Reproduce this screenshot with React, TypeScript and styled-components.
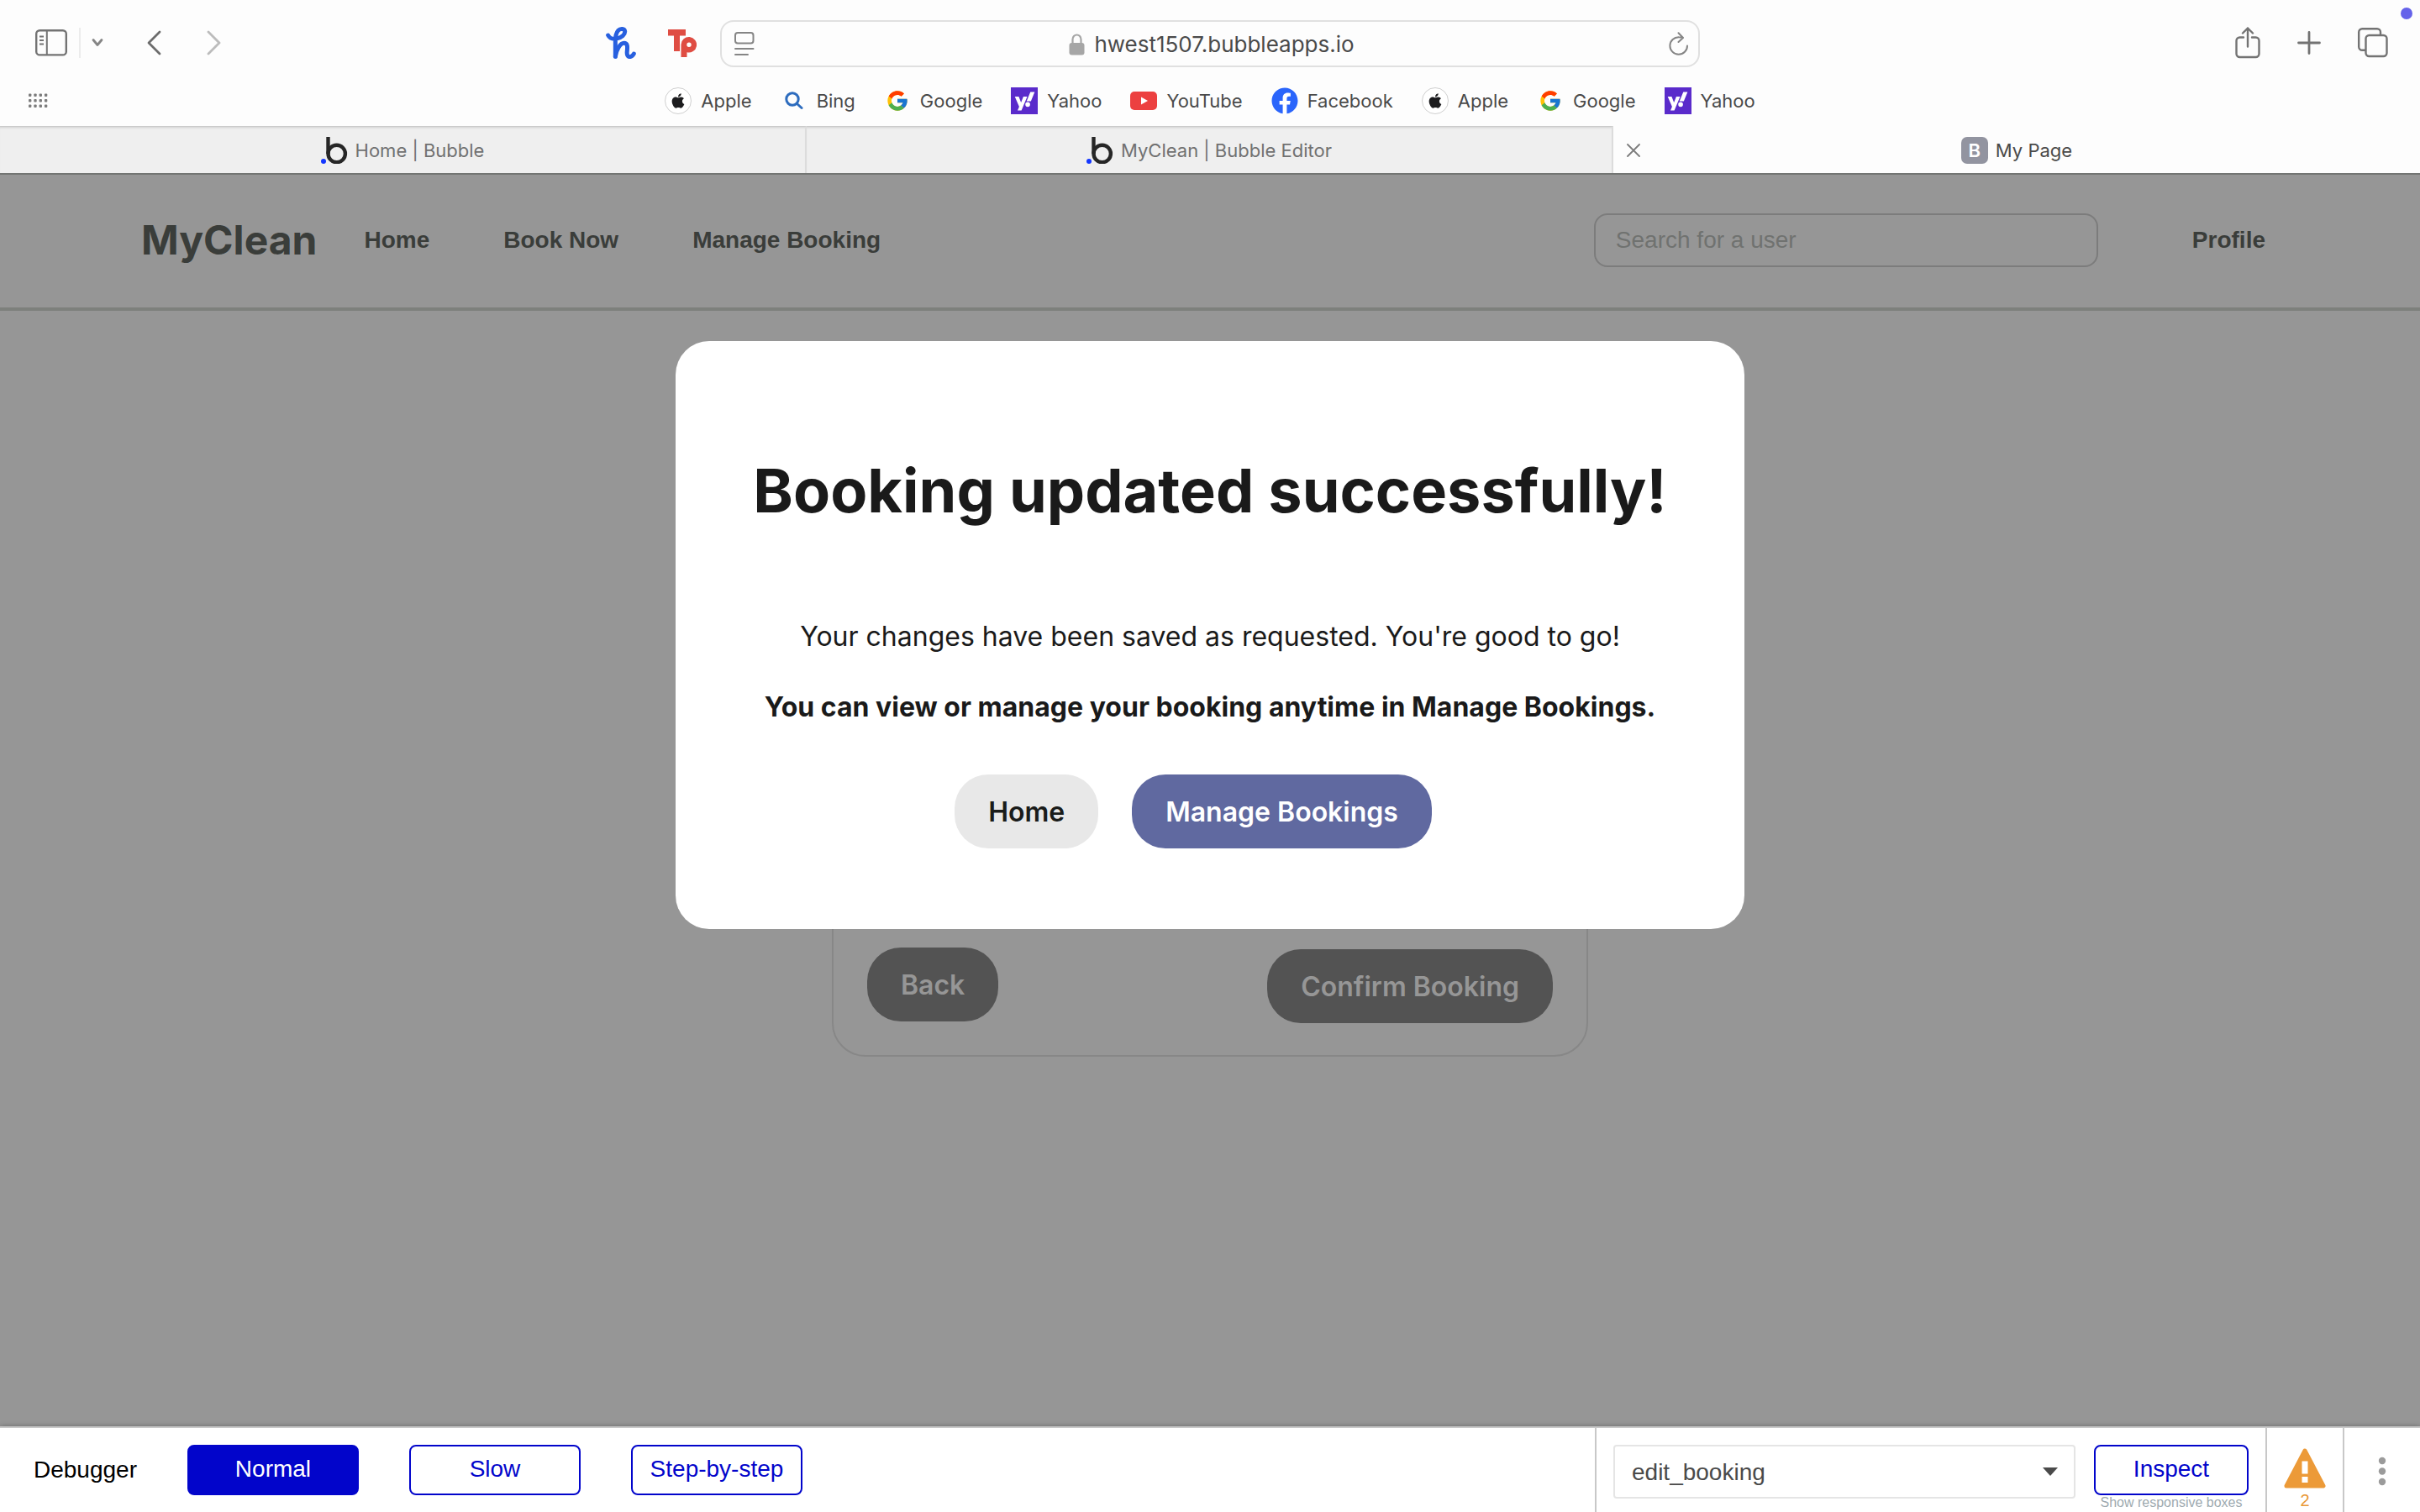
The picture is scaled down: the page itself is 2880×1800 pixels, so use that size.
import React from "react";
import styled, { createGlobalStyle, css } from "styled-components";
import { FaApple, FaFacebook, FaYahoo } from "react-icons/fa";
import { FcGoogle } from "react-icons/fc";

const ui = `Inter, Roboto, sans-serif`;
const helv = `"Liberation Sans", Arial, sans-serif`;
const blue = "#0205cb";
const line = "#c8c8c8";
const iconGrey = "#737373";

const GlobalStyle = createGlobalStyle`
  *, *::before, *::after { box-sizing: border-box; }
  body { margin: 0; background: #969696; }
  button, input, select { font: inherit; color: inherit; margin: 0; }
  svg { display: block; flex: none; }
`;

const Window = styled.div`
  display: flex;
  flex-direction: column;
  min-height: 100vh;
  font-family: ${ui};
`;

/* ---------- Browser chrome ---------- */

const Chrome = styled.header`
  position: relative;
  background: #fdfdfd;
  color: #4a4a4a;
`;

const StatusDot = styled.span`
  position: absolute;
  top: 9px;
  right: 9px;
  width: 14px;
  height: 14px;
  border-radius: 50%;
  background: #6562ea;
`;

const Toolbar = styled.div`
  display: grid;
  grid-template-columns: 1fr minmax(0, 1166px) 1fr;
  align-items: center;
  padding: 24px 0 10px;
`;

const ToolGroup = styled.div<{ $end?: boolean }>`
  display: flex;
  align-items: center;
  justify-content: ${(p) => (p.$end ? "flex-end" : "flex-start")};
  padding: ${(p) => (p.$end ? "0 38px 2px 0" : "0 28px 2px 42px")};
  gap: ${(p) => (p.$end ? "44px" : "0")};
`;

const IconButton = styled.button`
  display: flex;
  align-items: center;
  justify-content: center;
  padding: 0;
  border: 0;
  background: none;
`;

const ToolDivider = styled.span`
  width: 2px;
  height: 36px;
  margin: 0 13px 0 14px;
  background: #ececec;
`;

const HistoryButtons = styled.div`
  display: flex;
  gap: 54px;
  margin-left: 51px;
`;

const Extensions = styled.div`
  display: flex;
  align-items: center;
  gap: 38px;
  margin-left: auto;
`;

const AddressBar = styled.div`
  display: flex;
  align-items: center;
  height: 56px;
  padding: 0 11px 0 15px;
  border: 2px solid #e0e0e0;
  border-radius: 16px;
`;

const Address = styled.label`
  display: flex;
  flex: 1;
  align-items: center;
  justify-content: center;
  gap: 11px;
  padding-top: 2px;
`;

const AddressInput = styled.input`
  field-sizing: content;
  padding: 0;
  border: 0;
  outline: 0;
  background: none;
  font-size: 26px;
  line-height: 32px;
`;

const Favourites = styled.nav`
  display: grid;
  grid-template-columns: 1fr auto 1fr;
  align-items: center;
  height: 60px;
  padding: 0 33px;
`;

const FavouriteList = styled.div`
  display: flex;
  gap: 34px;
`;

const Favourite = styled.a`
  display: flex;
  align-items: center;
  gap: 11px;
  color: inherit;
  font-size: 22px;
  line-height: 32px;
  text-decoration: none;
`;

const FavIcon = styled.span<{ $bg?: string; $ring?: boolean; $round?: boolean; $color?: string }>`
  display: flex;
  align-items: center;
  justify-content: center;
  width: 32px;
  height: 32px;
  border: ${(p) => (p.$ring ? "1px solid #cfcfcf" : "0")};
  border-radius: ${(p) => (p.$ring || p.$round ? "50%" : "0")};
  background: ${(p) => p.$bg ?? "none"};
  color: ${(p) => p.$color ?? "inherit"};
`;

const TabStrip = styled.div`
  display: grid;
  grid-template-columns: 1fr 1fr 1fr;
`;

const Tab = styled.div<{ $active?: boolean }>`
  display: grid;
  grid-template-columns: 48px 1fr 48px;
  align-items: center;
  height: 56px;
  border-top: 1px solid ${(p) => (p.$active ? "#fdfdfd" : "#cbcbcb")};
  border-right: ${(p) => (p.$active ? "0" : "2px solid #dcdcdc")};
  background: ${(p) => (p.$active ? "#fdfdfd" : "#efefef")};
  box-shadow: ${(p) => (p.$active ? "none" : "inset 0 3px 3px -2px #d0d0d0")};
  color: ${(p) => (p.$active ? "#4a4a4a" : "#717171")};
`;

const TabTitle = styled.button`
  display: flex;
  grid-column: 2;
  align-items: center;
  justify-content: center;
  gap: 9px;
  padding: 0;
  border: 0;
  background: none;
  font-size: 22px;
  line-height: 32px;
`;

const LetterIcon = styled.span`
  width: 32px;
  height: 32px;
  border-radius: 7px;
  background: #9294a0;
  color: #fff;
  font-size: 22px;
  font-weight: 600;
  line-height: 33px;
  text-align: center;
`;

/* ---------- Site page under the overlay ---------- */

const Stage = styled.div`
  position: relative;
  flex: 1;
  border-top: 2px solid #737573;
  background: #969696;
`;

const SiteHeader = styled.header`
  display: flex;
  align-items: center;
  height: 162px;
  padding: 0 184px 2px 168px;
  border-bottom: 4px solid #7d807c;
  color: #3a3d3a;
  font-family: ${helv};
`;

const Brand = styled.span`
  font-family: ${ui};
  font-size: 48px;
  font-weight: 700;
  line-height: 56px;
`;

const SiteNav = styled.nav`
  display: flex;
  gap: 88px;
  margin-left: 56px;
`;

const SiteLink = styled.a`
  color: inherit;
  font-size: 28px;
  font-weight: 700;
  line-height: 32px;
  text-decoration: none;
`;

const Search = styled.input`
  width: 600px;
  height: 64px;
  margin: 0 112px 0 auto;
  padding: 0 24px;
  border: 2px solid #7c7c7c;
  border-radius: 16px;
  background: none;
  font-size: 28px;
  &::placeholder {
    color: #707270;
    opacity: 1;
  }
`;

const BookingCard = styled.section`
  display: flex;
  flex-direction: column;
  justify-content: flex-end;
  width: 900px;
  min-height: 848px;
  margin: 40px auto 0;
  padding: 38px 40px;
  border: 2px solid #878787;
  border-radius: 40px;
`;

const CardActions = styled.div`
  display: flex;
  align-items: flex-start;
  justify-content: space-between;
  min-height: 90px;
`;

const tones = {
  light: css`
    background: #e8e8e8;
    color: #1a1c1a;
  `,
  primary: css`
    background: #6069a0;
    color: #fff;
  `,
  dimmed: css`
    background: #535353;
    color: #969696;
  `,
};

const PillButton = styled.button<{ $tone: keyof typeof tones; $low?: boolean }>`
  align-self: ${(p) => (p.$low ? "flex-end" : "flex-start")};
  height: 88px;
  padding: 2px 40px 0;
  border: 0;
  border-radius: 40px;
  font-size: 32px;
  font-weight: 600;
  line-height: 40px;
  ${(p) => tones[p.$tone]}
`;

/* ---------- Dialog ---------- */

const Overlay = styled.div`
  position: absolute;
  inset: 0;
  display: flex;
  align-items: flex-start;
  justify-content: center;
  padding-top: 198px;
`;

const Dialog = styled.div`
  display: flex;
  flex-direction: column;
  align-items: center;
  width: 1272px;
  padding: 134px 40px 96px;
  border-radius: 40px;
  background: #fff;
  color: #1a1a1a;
  text-align: center;
`;

const DialogTitle = styled.h1`
  margin: 0 0 110px;
  font-size: 72px;
  font-weight: 700;
  line-height: 88px;
  white-space: nowrap;
`;

const Message = styled.p<{ $strong?: boolean }>`
  margin: 0;
  font-size: 32px;
  font-weight: ${(p) => (p.$strong ? 700 : 400)};
  line-height: 40px;
  & + & {
    margin-top: 44px;
  }
`;

const DialogActions = styled.div`
  display: flex;
  gap: 40px;
  margin-top: 60px;
  padding-right: 40px;
`;

/* ---------- Debugger bar ---------- */

const DebugBar = styled.footer`
  position: relative;
  display: flex;
  height: 102px;
  border-top: 2px solid ${line};
  background: #fff;
  box-shadow: 0 0 6px rgba(0, 0, 0, 0.3);
  color: #000;
  font-family: ${helv};
  font-size: 28px;
  line-height: 32px;
`;

const SpeedGroup = styled.div`
  display: flex;
  flex: 1;
  align-items: flex-start;
  gap: 60px;
  padding: 20px 40px;
`;

const DebugLabel = styled.span`
  line-height: 60px;
`;

const DebugButton = styled.button<{ $filled?: boolean; $narrow?: boolean }>`
  width: ${(p) => (p.$narrow ? "184px" : "204px")};
  height: 60px;
  padding: 0 0 2px;
  border: 2px solid ${blue};
  border-radius: 8px;
  background: ${(p) => (p.$filled ? blue : "#fff")};
  color: ${(p) => (p.$filled ? "#fff" : blue)};
`;

const Inspector = styled.div`
  display: flex;
  gap: 22px;
  padding: 20px 20px 0;
  border-left: 2px solid ${line};
`;

const SelectBox = styled.div`
  display: grid;
  align-items: center;
  width: 550px;
  height: 64px;
  border: 2px solid #e5e5e5;
  border-radius: 4px;
  color: #4a4a4a;
  & > * {
    grid-area: 1 / 1;
  }
  & > svg {
    justify-self: end;
    margin-right: 19px;
    pointer-events: none;
  }
`;

const PageSelect = styled.select`
  width: 100%;
  height: 60px;
  padding: 2px 20px 0;
  border: 0;
  background: none;
  appearance: none;
`;

const InspectColumn = styled.div`
  display: flex;
  flex-direction: column;
  align-items: center;
`;

const BoxesLink = styled.a`
  color: #9eaab0;
  font-size: 16px;
  line-height: 18px;
  text-decoration: none;
  white-space: nowrap;
`;

const DebugCell = styled.button<{ $wide?: boolean }>`
  display: flex;
  flex-direction: column;
  align-items: center;
  width: 92px;
  padding: ${(p) => (p.$wide ? "34px 0 0" : "24px 0 0")};
  border: 0;
  border-left: 2px solid ${line};
  background: none;
  color: #e99837;
  font-size: 20px;
  line-height: 28px;
`;

/* ---------- Drawings ---------- */

const SidebarIcon = () => (
  <svg width="38" height="32" viewBox="0 0 38 32" fill="none" stroke={iconGrey} strokeWidth="2.4">
    <rect x="1.2" y="1.2" width="35.6" height="29.2" rx="4" />
    <path d="M13.8 1.5v29M5 8.5h5M5 13h5M5 17.500h5" strokeWidth="2" />
  </svg>
);

const Chevron = ({ d, w, h, color }: { d: string; w: number; h: number; color: string }) => (
  <svg width={w} height={h} viewBox={`0 0 ${w} ${h}`} fill="none" stroke={color} strokeWidth="2.8" strokeLinecap="round" strokeLinejoin="round">
    <path d={d} />
  </svg>
);

const HoneyIcon = () => (
  <svg width="36" height="38" viewBox="61 57 108 114" fill="none" stroke="#2860df" strokeLinecap="round" strokeLinejoin="round">
    <path strokeWidth="15" d="M69 87C75 99 87 101 99 99C118 96 130 84 129 73C128 63 113 62 105 70C97 79 95 92 95 108V163" />
    <path strokeWidth="15" d="M95 163C98 140 112 115 126 115C140 115 138 130 137 142C135 158 139 164 147 164C154 163 158 159 161 153" />
  </svg>
);

const TpIcon = () => (
  <svg width="34" height="33" viewBox="0 0 34 33">
    <path d="M0 0h21v7.500h-7v18.500H7V7.500H0z" fill="#df4d43" />
    <path fillRule="evenodd" d="M15.500 33V18a9.300 9.300 0 1 1 7 9.300V33zM25 15.500a2.700 2.700 0 1 0 0 5.400a2.700 2.700 0 0 0 0-5.400z" fill="#df4d43" />
  </svg>
);

const ReaderIcon = () => (
  <svg width="24" height="28" viewBox="0 0 24 28" fill="none" stroke="#858585" strokeWidth="2" strokeLinecap="round">
    <rect x="1" y="1" width="21.500" height="12.500" rx="3" />
    <path d="M1 20h21.500M1 27h15" />
  </svg>
);

const LockIcon = () => (
  <svg width="19" height="26" viewBox="0 0 19 26">
    <path d="M4.500 12V7a5 5.500 0 0 1 10 0v5" fill="none" stroke="#a6a6a6" strokeWidth="2.200" />
    <rect x="0.500" y="11" width="18" height="14.500" rx="3" fill="#a6a6a6" />
  </svg>
);

const ReloadIcon = () => (
  <svg width="24" height="28" viewBox="0 0 24 28" fill="none" stroke="#858585" strokeWidth="2" strokeLinecap="round" strokeLinejoin="round">
    <path d="M22 16.500A10.300 10.300 0 1 1 12 6.200c2 0 4 .2 5 .8M11.500 1.200L17 7l-5.500 5" />
  </svg>
);

const ShareIcon = () => (
  <svg width="30" height="38" viewBox="0 0 30 38" fill="none" stroke={iconGrey} strokeWidth="2.400" strokeLinecap="round" strokeLinejoin="round">
    <path d="M10 12.500H5.500a4 4 0 0 0-4 4V32a4 4 0 0 0 4 4h19a4 4 0 0 0 4-4V16.500a4 4 0 0 0-4-4H20M15 23.500V1.500M9 7.500l6-6 6 6" />
  </svg>
);

const PlusIcon = () => (
  <svg width="28" height="28" viewBox="0 0 28 28" stroke={iconGrey} strokeWidth="2.800" strokeLinecap="round">
    <path d="M14 1.500v25M1.500 14h25" />
  </svg>
);

const TabsIcon = () => (
  <svg width="36" height="36" viewBox="0 0 36 36" fill="none" stroke={iconGrey} strokeWidth="2.400" strokeLinejoin="round">
    <path d="M9.500 26.800H5.200a4 4 0 0 1-4-4V5.200a4 4 0 0 1 4-4H23a4 4 0 0 1 4 4V9" />
    <rect x="9.500" y="9" width="25" height="25" rx="4" />
  </svg>
);

const GridIcon = () => (
  <svg width="24" height="18" viewBox="0 0 24 18" fill="#7c7c7c">
    {[0, 1, 2].map((r) => [0, 1, 2, 3].map((c) => <rect key={`${r}${c}`} x={1 + c * 6.3} y={r * 6.5 + 0.5} width="3.400" height="3.600" rx="1" />))}
  </svg>
);

const BingIcon = () => (
  <svg width="22" height="22" viewBox="0 0 22 22" fill="none" stroke="#2d6cbe" strokeWidth="3" strokeLinecap="round">
    <circle cx="9" cy="9" r="7.200" />
    <path d="M14.500 14.500l5.500 5" />
  </svg>
);

const YouTubeIcon = () => (
  <svg width="32" height="22" viewBox="0 0 32 22">
    <rect width="32" height="22" rx="5" fill="#ec4040" />
    <path d="M13 6.500v9l8-4.500z" fill="#fff" />
  </svg>
);

const BubbleIcon = () => (
  <svg width="32" height="32" viewBox="0 0 32 32" fill="none">
    <path d="M8.500 0v20" stroke="#262626" strokeWidth="4.400" />
    <circle cx="18.700" cy="20" r="10.200" stroke="#262626" strokeWidth="4.400" />
    <circle cx="3" cy="29" r="3" fill="#1437ff" />
  </svg>
);

const CloseIcon = () => (
  <svg width="16" height="16" viewBox="0 0 16 16" stroke="#7c7c7c" strokeWidth="1.800" strokeLinecap="round">
    <path d="M1 1l14 14M15 1L1 15" />
  </svg>
);

const WarningIcon = () => (
  <svg width="50" height="48" viewBox="0 0 50 48">
    <path d="M25 3L47 45H3z" fill="#ec9a38" stroke="#ec9a38" strokeWidth="5" strokeLinejoin="round" />
    <path d="M21.500 15.500h7v15h-7zM21.500 34h7v7h-7z" fill="#fff" />
  </svg>
);

const DotsIcon = () => (
  <svg width="10" height="36" viewBox="0 0 10 36" fill="#9b9b9b">
    <circle cx="5" cy="5" r="4.200" />
    <circle cx="5" cy="17.500" r="4.200" />
    <circle cx="5" cy="30" r="4.200" />
  </svg>
);

const AppleMark = () => (
  <FavIcon $ring $bg="#fff" $color="#1c1c1e">
    <FaApple size={20} />
  </FavIcon>
);
const GoogleMark = () => (
  <FavIcon>
    <FcGoogle size={28} />
  </FavIcon>
);
const YahooMark = () => (
  <FavIcon $bg="#5a2bcb" $color="#fff">
    <FaYahoo size={25} />
  </FavIcon>
);

const favourites: [string, React.ReactNode][] = [
  ["Apple", <AppleMark />],
  ["Bing", <FavIcon><BingIcon /></FavIcon>],
  ["Google", <GoogleMark />],
  ["Yahoo", <YahooMark />],
  ["YouTube", <FavIcon><YouTubeIcon /></FavIcon>],
  ["Facebook", <FavIcon $round $bg="#fff" $color="#2a65fb"><FaFacebook size={32} /></FavIcon>],
  ["Apple", <AppleMark />],
  ["Google", <GoogleMark />],
  ["Yahoo", <YahooMark />],
];

export default function App() {
  return (
    <Window>
      <GlobalStyle />
      <Chrome>
        <StatusDot />
        <Toolbar>
          <ToolGroup>
            <IconButton aria-label="Sidebar"><SidebarIcon /></IconButton>
            <ToolDivider />
            <IconButton aria-label="Tab groups"><Chevron w={14} h={12} d="M2 2.500l5 6 5-6" color="#858585" /></IconButton>
            <HistoryButtons>
              <IconButton aria-label="Back"><Chevron w={18} h={30} d="M16 2L3 15l13 13" color="#6c6c6c" /></IconButton>
              <IconButton aria-label="Forward"><Chevron w={18} h={30} d="M2 2l13 13L2 28" color="#bcbcbc" /></IconButton>
            </HistoryButtons>
            <Extensions>
              <IconButton aria-label="Honey"><HoneyIcon /></IconButton>
              <IconButton aria-label="Toucan"><TpIcon /></IconButton>
            </Extensions>
          </ToolGroup>
          <AddressBar>
            <IconButton aria-label="Page menu"><ReaderIcon /></IconButton>
            <Address>
              <LockIcon />
              <AddressInput aria-label="Address" defaultValue="hwest1507.bubbleapps.io" />
            </Address>
            <IconButton aria-label="Reload"><ReloadIcon /></IconButton>
          </AddressBar>
          <ToolGroup $end>
            <IconButton aria-label="Share"><ShareIcon /></IconButton>
            <IconButton aria-label="New tab"><PlusIcon /></IconButton>
            <IconButton aria-label="Tab overview"><TabsIcon /></IconButton>
          </ToolGroup>
        </Toolbar>
        <Favourites aria-label="Favourites">
          <GridIcon />
          <FavouriteList>
            {favourites.map(([name, icon], i) => (
              <Favourite href="#" key={i}>
                {icon}
                {name}
              </Favourite>
            ))}
          </FavouriteList>
        </Favourites>
        <TabStrip>
          <Tab>
            <TabTitle><BubbleIcon />Home | Bubble</TabTitle>
          </Tab>
          <Tab>
            <TabTitle><BubbleIcon />MyClean | Bubble Editor</TabTitle>
          </Tab>
          <Tab $active>
            <IconButton aria-label="Close tab"><CloseIcon /></IconButton>
            <TabTitle><LetterIcon>B</LetterIcon>My Page</TabTitle>
          </Tab>
        </TabStrip>
      </Chrome>

      <Stage>
        <SiteHeader>
          <Brand>MyClean</Brand>
          <SiteNav>
            <SiteLink href="#">Home</SiteLink>
            <SiteLink href="#">Book Now</SiteLink>
            <SiteLink href="#">Manage Booking</SiteLink>
          </SiteNav>
          <Search aria-label="Search for a user" placeholder="Search for a user" />
          <SiteLink href="#">Profile</SiteLink>
        </SiteHeader>
        <BookingCard>
          <CardActions>
            <PillButton $tone="dimmed">Back</PillButton>
            <PillButton $tone="dimmed" $low>Confirm Booking</PillButton>
          </CardActions>
        </BookingCard>
        <Overlay>
          <Dialog role="dialog" aria-labelledby="dialog-title">
            <DialogTitle id="dialog-title">Booking updated successfully!</DialogTitle>
            <Message>Your changes have been saved as requested. You're good to go!</Message>
            <Message $strong>You can view or manage your booking anytime in Manage Bookings.</Message>
            <DialogActions>
              <PillButton $tone="light">Home</PillButton>
              <PillButton $tone="primary">Manage Bookings</PillButton>
            </DialogActions>
          </Dialog>
        </Overlay>
      </Stage>

      <DebugBar>
        <SpeedGroup>
          <DebugLabel>Debugger</DebugLabel>
          <DebugButton $filled>Normal</DebugButton>
          <DebugButton>Slow</DebugButton>
          <DebugButton>Step-by-step</DebugButton>
        </SpeedGroup>
        <Inspector>
          <SelectBox>
            <PageSelect aria-label="Element" defaultValue="edit_booking">
              <option>edit_booking</option>
            </PageSelect>
            <svg width="18" height="10" viewBox="0 0 18 10"><path d="M0 0h18l-9 10z" fill="#4a4a4a" /></svg>
          </SelectBox>
          <InspectColumn>
            <DebugButton $narrow>Inspect</DebugButton>
            <BoxesLink href="#">Show responsive boxes</BoxesLink>
          </InspectColumn>
        </Inspector>
        <DebugCell aria-label="2 issues"><WarningIcon /><span>2</span></DebugCell>
        <DebugCell $wide aria-label="More"><DotsIcon /></DebugCell>
      </DebugBar>
    </Window>
  );
}
